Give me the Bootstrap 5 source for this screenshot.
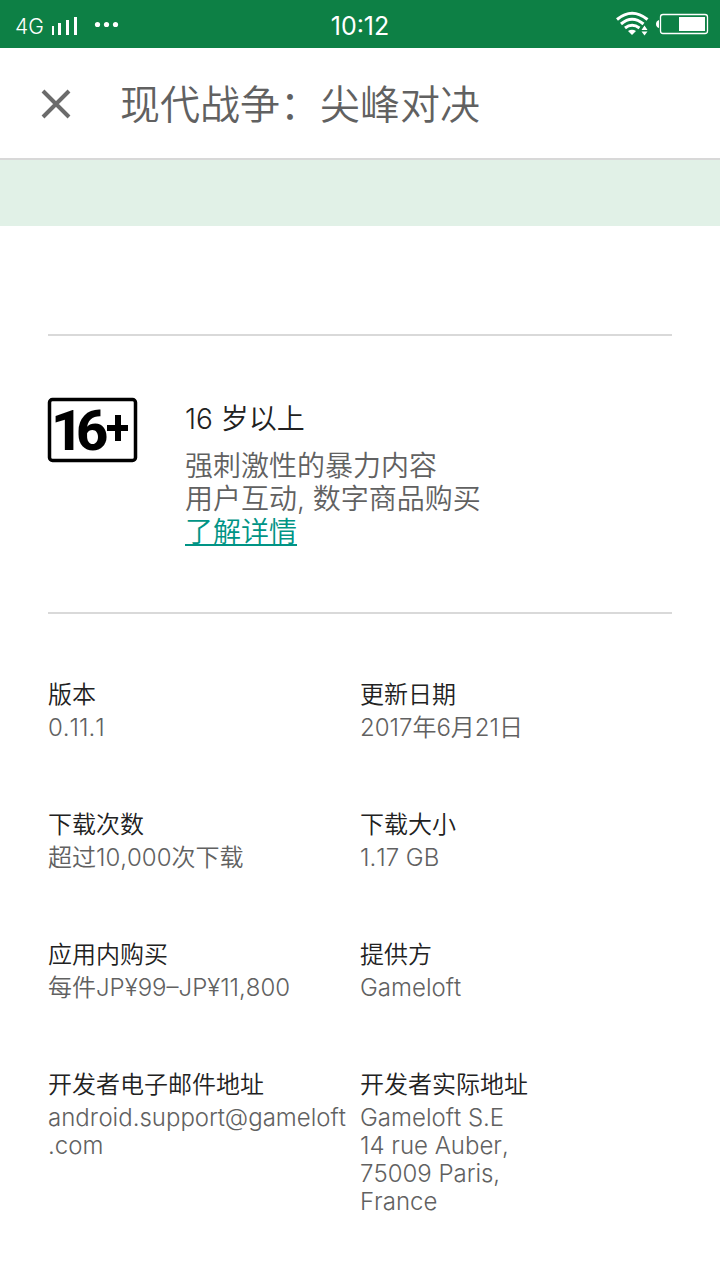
<!DOCTYPE html>
<html lang="zh-CN">
<head>
<meta charset="utf-8">
<meta name="viewport" content="width=device-width, initial-scale=1">
<title>现代战争：尖峰对决</title>
<link href="https://cdn.jsdelivr.net/npm/bootstrap@5.3.0/dist/css/bootstrap.min.css" rel="stylesheet">
<style>
body { font-family: Inter, "Noto Sans CJK SC DemiLight", "Noto Sans CJK SC", sans-serif; font-weight: 350; font-kerning: none; color: #616161; background: #fff; }
.status-bar { background: #0d8045; color: #fff; height: 48px; }
.status-bar .net { font-size: 21px; line-height: 24px; margin-left: 15px; padding-top: 5px; }
.status-bar .clock { font-size: 25px; line-height: 44px; font-weight: 400; }
.side { flex: 1 1 0; }
.app-bar { height: 112px; border-bottom: 2px solid #d8d8d8; }
.app-bar h1 { font-size: 40px; line-height: 48px; font-weight: 350; margin-left: 48px; }
.close-btn { width: 32px; height: 32px; margin-left: 40px; }
.band { height: 66px; background: #e1f1e7; }
.rule { border-top: 2px solid #d9d9d9; }
.page-body { padding: 108px 48px 64px; }
.rating { padding: 62px 0 63px; gap: 48px; }
.rating svg { overflow: visible; }
.rating h2 { font-size: 28px; line-height: 42px; font-weight: 350; color: #212121; margin-bottom: 10px; }
.rating p { font-size: 28px; line-height: 33px; }
.rating a { color: #009485; text-underline-offset: 2px; text-decoration-thickness: 2px; text-decoration-skip-ink: none; }
.facts { padding-top: 65px; row-gap: 67px; font-size: 24px; line-height: 28px; }
.facts dt { font-family: "Noto Sans CJK SC DemiLight", "Noto Sans CJK SC", sans-serif; font-weight: 350; color: #212121; margin-bottom: 7px; }
.facts dd { white-space: nowrap; }
</style>
</head>
<body>
<div class="status-bar d-flex align-items-center">
  <div class="side d-flex align-items-center">
    <span class="net">4G</span>
    <svg class="ms-2" width="70" height="48" viewBox="52 0 70 48" fill="#fff" aria-hidden="true">
      <path d="M51 26h3v9h-3zM58 23h3v12h-3zM66 20h3v15h-3zM74 17h3v18h-3z"/>
      <circle cx="97.500" cy="24.500" r="2.600"/><circle cx="106.500" cy="24.500" r="2.600"/><circle cx="115.500" cy="24.500" r="2.600"/>
    </svg>
  </div>
  <span class="clock pt-1">10:12</span>
  <div class="side d-flex justify-content-end">
    <svg width="108" height="48" viewBox="612 0 108 48" fill="none" stroke="#fff" aria-hidden="true">
      <path d="M617 19.500Q632 7 647.500 19.500M621 24Q632 14.500 643.500 24M625 28Q632 22.500 639.500 28" stroke-width="3"/>
      <path d="M628 31Q632 28.500 636 31L632 35z" fill="#fff" stroke="none"/>
      <path d="M641.500 30L644.500 25.500 647.500 30zM641.500 31.500L644.500 35.500 647.500 31.500z" fill="#fff" stroke="none"/>
      <rect x="660.500" y="14.500" width="47" height="19" rx="2.500" stroke-width="1.300"/>
      <path d="M679 17h26v14h-26zM659 20v8Q656 27 656 24T659 20z" fill="#fff" stroke="none"/>
    </svg>
  </div>
</div>

<header class="app-bar d-flex align-items-center pt-1">
  <button type="button" class="close-btn btn p-0 border-0 d-flex" aria-label="关闭">
    <svg width="32" height="32" viewBox="0 0 32 32" stroke="#6b6b6b" stroke-width="4" aria-hidden="true"><path d="M3 2L29 28M29 2L3 28"/></svg>
  </button>
  <h1 class="mb-0">现代战争：尖峰对决</h1>
</header>
<div class="band"></div>

<main class="page-body">
  <section class="rating rule d-flex align-items-start">
    <svg class="flex-shrink-0" width="89" height="64" viewBox="0 0 89 64" role="img" aria-label="16+">
      <rect x="1.500" y="1.500" width="86" height="61" rx="3" fill="#fff" stroke="#000" stroke-width="3.500"/>
      <text x="3 28" y="52" font-family="Roboto, sans-serif" font-weight="800" font-size="56">16</text>
      <path d="M59 27h8v-10h6v10h7v6h-7v10h-6v-10h-8z"/>
    </svg>
    <div>
      <h2>16 岁以上</h2>
      <p class="mb-0">强刺激性的暴力内容<br>用户互动, 数字商品购买<br><a href="#">了解详情</a></p>
    </div>
  </section>

  <section class="facts rule row gx-0">
    <dl class="col-6 mb-0"><dt>版本</dt><dd class="mb-0">0.11.1</dd></dl>
    <dl class="col-6 mb-0"><dt>更新日期</dt><dd class="mb-0">2017年6月21日</dd></dl>
    <dl class="col-6 mb-0"><dt>下载次数</dt><dd class="mb-0">超过10,000次下载</dd></dl>
    <dl class="col-6 mb-0"><dt>下载大小</dt><dd class="mb-0">1.17 GB</dd></dl>
    <dl class="col-6 mb-0"><dt>应用内购买</dt><dd class="mb-0">每件JP¥99–JP¥11,800</dd></dl>
    <dl class="col-6 mb-0"><dt>提供方</dt><dd class="mb-0">Gameloft</dd></dl>
    <dl class="col-6 mb-0"><dt>开发者电子邮件地址</dt><dd class="mb-0">android.support@gameloft<br>.com</dd></dl>
    <dl class="col-6 mb-0"><dt>开发者实际地址</dt><dd class="mb-0">Gameloft S.E<br>14 rue Auber,<br>75009 Paris,<br>France</dd></dl>
  </section>
</main>
<script src="https://cdn.jsdelivr.net/npm/bootstrap@5.3.0/dist/js/bootstrap.bundle.min.js"></script>
</body>
</html>
